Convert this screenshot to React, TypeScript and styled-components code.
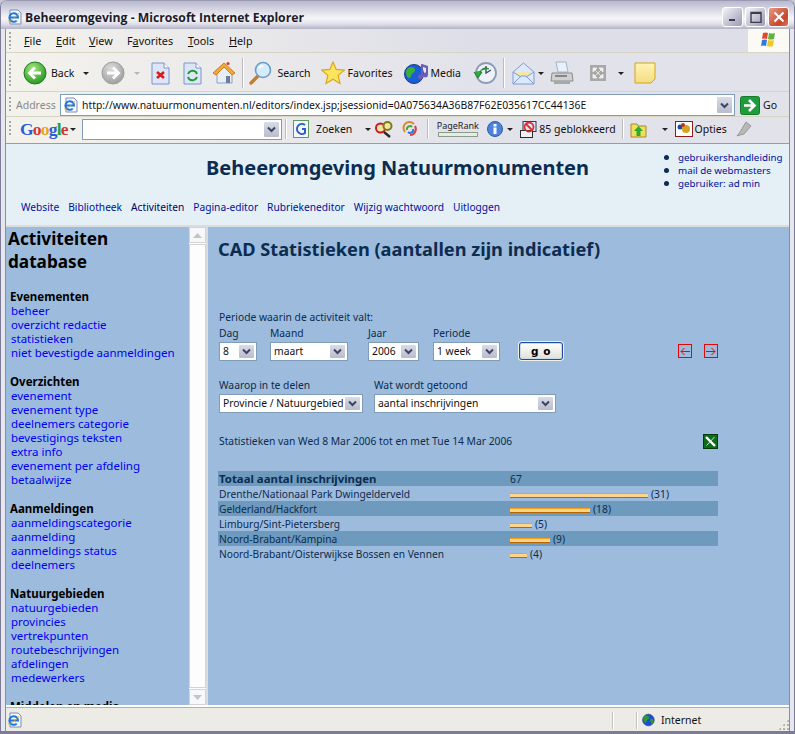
import React from 'react'
import styled, { createGlobalStyle } from 'styled-components'

const GlobalStyle = createGlobalStyle`
    *, *::before, *::after { box-sizing: border-box; }
    html, body { margin: 0; padding: 0; background: #c8c8d8; overflow: hidden; }
    a { text-decoration: none; }
`

const UI = '"Noto Sans", Tahoma, sans-serif'
const WIDE = '"DejaVu Sans", Verdana, sans-serif'

const Window = styled.div`
    width: 795px;
    height: 734px;
    display: flex;
    flex-direction: column;
    background: #e6e6ee;
    border: 1px solid #7c7c98;
    border-bottom-width: 3px;
    border-top-color: #9a9ab4;
    border-radius: 7px 7px 0 0;
    overflow: hidden;
`

const TitleBar = styled.div`
    height: 28px;
    flex: none;
    display: flex;
    align-items: center;
    padding: 4px 5px 0 6px;
    background: linear-gradient(#b8b8cc 0%, #d6d6e4 30%, #f6f6f9 62%, #e0e0ea 82%, #b2b2c6 100%);
`

const TitleText = styled.span`
    font: bold 12.2px "Open Sans", sans-serif;
    color: #1c1c28;
    margin-left: 2px;
    flex: 1;
`

const WinButton = styled.div<{ $close?: boolean }>`
    width: 21px;
    height: 20px;
    margin-left: 2px;
    border: 1px solid #fff;
    border-radius: 3px;
    background: ${p => (p.$close ? 'linear-gradient(135deg, #e89a84, #c8452c 70%, #d87860)' : 'linear-gradient(135deg, #f4f4f8, #b4b4c8 70%, #9c9cb4)')};
    display: flex;
    align-items: center;
    justify-content: center;
`

const Frame = styled.div`
    flex: 1;
    min-height: 0;
    display: flex;
    flex-direction: column;
    margin: 0 4px;
    background: #e8e8f0;
    border-left: 1px solid #8c8ca0;
    border-right: 1px solid #8c8ca0;
`

const MenuBar = styled.div`
    height: 24px;
    flex: none;
    display: flex;
    align-items: center;
    background: linear-gradient(90deg, #f3f2ec, #dedee8 60%, #dedee8);
    border-bottom: 1px solid #d8d4c4;
`

const Grip = styled.i<{ $mr: number }>`
    width: 2px;
    height: 70%;
    flex: none;
    margin: 0 ${p => p.$mr}px 0 3px;
    background: repeating-linear-gradient(#a8a8a8 0 2px, transparent 2px 4px);
`

const MenuItem = styled.span<{ $w: number }>`
    width: ${p => p.$w}px;
    flex: none;
    font: 10.8px ${UI};
    color: #111;
    u { text-decoration: underline; }
`

const FlagBox = styled.div`
    margin-left: auto;
    width: 41px;
    height: 100%;
    background: #fbfaf5;
    display: flex;
    align-items: center;
    justify-content: center;
`

const ToolBar = styled.div`
    height: 39px;
    flex: none;
    display: flex;
    align-items: center;
    padding-top: 2px;
    background: linear-gradient(90deg, #f3f2ec, #e2e2ea 60%);
    border-bottom: 1px solid #d8d4c4;
`

const Tool = styled.div<{ $ml?: number }>`
    display: flex;
    align-items: center;
    flex: none;
    margin-left: ${p => p.$ml ?? 0}px;
    font: 10.5px ${UI};
    color: #111;
`

const Caret = styled.i<{ $ml?: number; $off?: boolean }>`
    width: 0;
    height: 0;
    flex: none;
    margin-left: ${p => p.$ml ?? 0}px;
    border-left: 3px solid transparent;
    border-right: 3px solid transparent;
    border-top: 3px solid ${p => (p.$off ? '#b4b4b4' : '#222')};
`

const Sep = styled.i<{ $ml: number; $h?: number }>`
    width: 1px;
    height: ${p => p.$h ?? 30}px;
    flex: none;
    margin-left: ${p => p.$ml}px;
    background: #bcbcbc;
    box-shadow: 1px 0 0 #fff;
`

const AddressBar = styled.div`
    height: 25px;
    flex: none;
    display: flex;
    align-items: center;
    padding-top: 2px;
    background: linear-gradient(90deg, #f3f2ec, #e2e2ea 60%);
    border-bottom: 1px solid #d8d4c4;
`

const AddressLabel = styled.span`
    font: 10.5px ${UI};
    color: #8a8a8a;
    width: 44px;
    flex: none;
`

const AddressField = styled.div`
    width: 675px;
    height: 22px;
    flex: none;
    display: flex;
    align-items: center;
    background: #fff;
    border: 1px solid #7f9db9;
    font: 10.4px ${UI};
    color: #111;
    padding-left: 2px;
    gap: 3px;
`

const AddressText = styled.span`
    flex: 1;
    white-space: nowrap;
    overflow: hidden;
`

const ArrowButton = styled.div`
    width: 17px;
    align-self: stretch;
    flex: none;
    margin: 1px;
    border: 1px solid #fff;
    border-radius: 2px;
    background: linear-gradient(#d8dce8, #b8bccc);
    display: flex;
    align-items: center;
    justify-content: center;
`

const GoogleBar = styled(AddressBar)`
    height: 27px;
    padding-top: 0;
    padding-bottom: 2px;
    border-bottom: 1px solid #9a9aa8;
`

const GoogleLogo = styled.span`
    font: bold 17.5px "Liberation Serif", serif;
    letter-spacing: -0.8px;
    width: 48px;
    flex: none;
`

const GoogleField = styled.div`
    width: 200px;
    height: 21px;
    flex: none;
    margin-left: 6px;
    background: #fff;
    border: 1px solid #7f9db9;
    display: flex;
    justify-content: flex-end;
`

const PageRank = styled.div`
    display: flex;
    flex-direction: column;
    align-items: center;
    font: 9px ${UI};
    line-height: 10px;
    color: #222;
    margin-left: 8px;
    width: 43px;
    flex: none;
`

const RankBar = styled.i`
    display: block;
    width: 40px;
    height: 5px;
    margin-top: 1px;
    border: 1px solid #8c9c8c;
    background: #e4ece4;
`

const Page = styled.div`
    flex: 1;
    min-height: 0;
    display: flex;
    flex-direction: column;
    background: #9dbbdc;
`

const Header = styled.div`
    height: 83px;
    flex: none;
    display: flex;
    flex-direction: column;
    background: #e4f0f6;
    border-bottom: 2px solid #dcdcdc;
`

const HeaderTop = styled.div`
    height: 55px;
    flex: none;
    display: flex;
    justify-content: space-between;
`

const SiteTitle = styled.h1`
    margin: 10px 0 0 200px;
    font: bold 20px ${UI};
    color: #0c2c50;
    white-space: nowrap;
`

const HelpList = styled.ul`
    margin: 7px 0 0;
    padding: 0;
    list-style: none;
    width: 125px;
    flex: none;
`

const HelpItem = styled.li`
    display: flex;
    align-items: center;
    height: 13px;
    font: 9.8px ${UI};
    color: #00109c;
    white-space: nowrap;
    &::before {
        content: '';
        flex: none;
        width: 5px;
        height: 5px;
        border-radius: 50%;
        background: #0c2c50;
        margin-right: 9px;
    }
`

const TopNav = styled.nav`
    display: flex;
    padding-left: 15px;
    padding-top: 1px;
    gap: 9px;
`

const TopLink = styled.a<{ $active?: boolean }>`
    font: 10.2px ${UI};
    color: ${p => (p.$active ? '#000060' : '#00109c')};
    white-space: nowrap;
`

const Body = styled.div`
    flex: 1;
    min-height: 0;
    display: flex;
`

const Side = styled.aside`
    width: 183px;
    flex: none;
    overflow: hidden;
    padding: 0 0 0 2px;
    color: #000;
`

const SideTitle = styled.h2`
    margin: 0 0 17px;
    font: bold 17.2px/23px ${UI};
    color: #000;
`

const SideSection = styled.section`
    margin: 0 0 15px 2px;
`

const SideHeading = styled.h3`
    margin: 0;
    font: bold 11.5px/14px ${UI};
    color: #000;
`

const SideLink = styled.a`
    display: block;
    font: 11.5px/14px ${UI};
    color: #0000f0;
    margin-left: 1px;
    white-space: nowrap;
`

const Scrollbar = styled.div`
    width: 19px;
    flex: none;
    display: flex;
    flex-direction: column;
    background: #fdfdfd;
    border-right: 2px solid #dcdcdc;
`

const ScrollButton = styled.div`
    height: 16px;
    flex: none;
    background: #f6f8fb;
    border: 1px solid #d4d4d4;
    display: flex;
    align-items: center;
    justify-content: center;
`

const Track = styled.div`
    flex: 1;
    border: 1px solid #d4d4d4;
    margin-top: 1px;
    margin-bottom: 1px;
`

const Main = styled.main`
    flex: 1;
    padding: 0 71px 0 10px;
    color: #0c2c50;
    font: 10.3px ${UI};
`

const PageTitle = styled.h2`
    margin: 11px 0 0;
    font: bold 18.2px/22px ${UI};
    color: #0c2c50;
    white-space: nowrap;
`

const Lead = styled.div`
    margin-top: 50px;
    line-height: 14px;
    padding-left: 1px;
`

const FilterRow = styled.div<{ $mt?: number }>`
    display: flex;
    align-items: flex-end;
    margin-top: ${p => p.$mt ?? 0}px;
`

const Field = styled.label<{ $w: number }>`
    width: ${p => p.$w}px;
    flex: none;
    display: flex;
    flex-direction: column;
    padding-left: 1px;
    line-height: 15px;
`

const Select = styled.div<{ $w: number }>`
    width: ${p => p.$w}px;
    height: 19px;
    margin-top: 1px;
    display: flex;
    align-items: center;
    background: #fff;
    border: 1px solid #7f9db9;
    color: #111;
    padding-left: 3px;
`

const SelectValue = styled.span`
    flex: 1;
    white-space: nowrap;
    overflow: hidden;
`

const GoButton = styled.button`
    width: 44px;
    height: 18px;
    padding: 0;
    margin-bottom: 1px;
    border: 1px solid #1c4c9c;
    border-radius: 3px;
    background: linear-gradient(#fff, #e0e0d8);
    box-shadow: 0 0 0 1px #f0f0e0, inset 0 0 0 1px #c8d8f0;
    font: bold 10.5px ${WIDE};
    letter-spacing: 0.5px;
    color: #000;
`

const NavIcons = styled.div`
    margin-left: auto;
    display: flex;
    gap: 12px;
    margin-bottom: 3px;
`

const RedBox = styled.div`
    width: 14px;
    height: 14px;
    border: 1px solid #e00808;
    display: flex;
    align-items: center;
    justify-content: center;
`

const StatLine = styled.div`
    display: flex;
    align-items: center;
    justify-content: space-between;
    margin-top: 20px;
    height: 16px;
    padding-left: 1px;
`

const Table = styled.div`
    margin-top: 22px;
`

const Row = styled.div<{ $band?: boolean }>`
    display: flex;
    align-items: center;
    height: 15px;
    padding-left: 1px;
    background: ${p => (p.$band ? '#6e9bbd' : 'transparent')};
    white-space: nowrap;
`

const RowLabel = styled.div<{ $bold?: boolean }>`
    width: 291px;
    flex: none;
    font-weight: ${p => (p.$bold ? 700 : 400)};
    font-size: ${p => (p.$bold ? 11.4 : 10.2)}px;
`

const Bar = styled.i`
    display: block;
    height: 5px;
    margin-top: 4px;
    margin-right: 3px;
    background: #ffd48c;
    border-top: 1px solid #ff9c14;
    border-bottom: 1px solid #b86400;
`

const StatusBar = styled.div`
    height: 26px;
    flex: none;
    display: flex;
    align-items: center;
    background: #ecebe6;
    border-top: 2px solid #fff;
    box-shadow: inset 0 1px 0 #b0b0b0;
    font: 10.5px ${UI};
    color: #111;
    padding: 2px 0 0 1px;
`

const StatusCell = styled.div<{ $ml: number }>`
    margin-left: ${p => p.$ml}px;
    height: 17px;
    border-left: 1px solid #c4c4bc;
    box-shadow: inset 1px 0 0 #fff;
    display: flex;
    align-items: center;
    padding-left: 5px;
    gap: 5px;
`

const ResizeGrip = styled.i`
    margin: auto 0 1px auto;
    width: 11px;
    height: 11px;
    background: radial-gradient(circle, #b4b4ac 1px, transparent 1.2px) 0 0 / 4px 4px;
    clip-path: polygon(100% 0, 100% 100%, 0 100%);
`

const menus: [React.ReactNode, number][] = [
    [<><u>F</u>ile</>, 32],
    [<><u>E</u>dit</>, 33],
    [<><u>V</u>iew</>, 38],
    [<>F<u>a</u>vorites</>, 61],
    [<><u>T</u>ools</>, 41],
    [<><u>H</u>elp</>, 40],
]

const sections = [
    { title: 'Evenementen', links: ['beheer', 'overzicht redactie', 'statistieken', 'niet bevestigde aanmeldingen'] },
    { title: 'Overzichten', links: ['evenement', 'evenement type', 'deelnemers categorie', 'bevestigings teksten', 'extra info', 'evenement per afdeling', 'betaalwijze'] },
    { title: 'Aanmeldingen', links: ['aanmeldingscategorie', 'aanmelding', 'aanmeldings status', 'deelnemers'] },
    { title: 'Natuurgebieden', links: ['natuurgebieden', 'provincies', 'vertrekpunten', 'routebeschrijvingen', 'afdelingen', 'medewerkers'] },
    { title: 'Middelen en media', links: [] },
]

const stats = [
    { label: 'Drenthe/Nationaal Park Dwingelderveld', count: 31, width: 138 },
    { label: 'Gelderland/Hackfort', count: 18, width: 80 },
    { label: 'Limburg/Sint-Pietersberg', count: 5, width: 22 },
    { label: 'Noord-Brabant/Kampina', count: 9, width: 40 },
    { label: 'Noord-Brabant/Oisterwijkse Bossen en Vennen', count: 4, width: 17 },
]

const topLinks = ['Website', 'Bibliotheek', 'Activiteiten', 'Pagina-editor', 'Rubriekeneditor', 'Wijzig wachtwoord', 'Uitloggen']

const Chevron = () => (
    <svg width="9" height="7" viewBox="0 0 9 7">
        <path d="M1 1.500 L4.500 5 L8 1.500" fill="none" stroke="#3c4460" strokeWidth="2" />
    </svg>
)

const IeIcon = ({ size = 16 }: { size?: number }) => (
    <svg width={size} height={size} viewBox="0 0 16 16">
        <path d="M3 1h8l3 3v11H3z" fill="#f4f6fc" stroke="#7c8cb0" />
        <path d="M2.500 8.500h8.500a4.300 4.300 0 1 0-1.300 3.100" fill="none" stroke="#1c78dc" strokeWidth="2" />
        <path d="M1 12c3 0 9-5 11-8" fill="none" stroke="#f0a020" strokeWidth="0.800" />
    </svg>
)

const RoundArrow = ({ off, dir }: { off?: boolean; dir: 'l' | 'r' }) => (
    <svg width="24" height="24" viewBox="0 0 24 24">
        <defs>
            <radialGradient id={off ? 'ra-off' : 'ra-on'} cx="0.4" cy="0.3" r="0.8">
                <stop offset="0" stopColor={off ? '#dcdcdc' : '#a4e87c'} />
                <stop offset="1" stopColor={off ? '#989898' : '#1c8c1c'} />
            </radialGradient>
        </defs>
        <circle cx="12" cy="12" r="11" fill={`url(#${off ? 'ra-off' : 'ra-on'})`} stroke={off ? '#9c9c9c' : '#1c7c1c'} />
        <path d={dir === 'l' ? 'M18 12H8M12 6.500 6.500 12l5.500 5.500' : 'M6 12h10M12 6.500l5.500 5.500L12 17.500'} fill="none" stroke="#fff" strokeWidth="3" />
    </svg>
)

const PageIcon = ({ kind }: { kind: 'stop' | 'refresh' }) => (
    <svg width="19" height="23" viewBox="0 0 19 23">
        <path d="M1 1h12l5 5v16H1z" fill="#dce6f8" stroke="#7c94c8" />
        <path d="M13 1v5h5" fill="#fff" stroke="#7c94c8" />
        {kind === 'stop' ? (
            <path d="M6 10l7 6M13 10l-7 6" stroke="#dc1c1c" strokeWidth="2.600" />
        ) : (
            <g fill="none" stroke="#1c9c2c" strokeWidth="2">
                <path d="M5 12a5 5 0 0 1 8-2l1 2" />
                <path d="M14 15a5 5 0 0 1-8 2l-1-2" />
            </g>
        )}
    </svg>
)

const HomeIcon = () => (
    <svg width="24" height="24" viewBox="0 0 24 24">
        <path d="M5 11v11h15V11l-6-6z" fill="#e8eef8" stroke="#8ca0c0" />
        <path d="M1 12 12 2l11 10-3 2-8-8-8 8z" fill="#f4a83c" stroke="#c87c1c" />
        <rect x="14" y="15" width="4" height="7" fill="#6c7c9c" />
        <circle cx="16" cy="2.500" r="1.600" fill="#dc3c2c" />
    </svg>
)

const SearchIcon = () => (
    <svg width="24" height="24" viewBox="0 0 24 24">
        <path d="M9 15 2 22" stroke="#c87c2c" strokeWidth="3.400" strokeLinecap="round" />
        <circle cx="14" cy="9" r="7.500" fill="#d4ecfc" stroke="#6c9cc8" strokeWidth="1.600" />
        <path d="M10 7a4 4 0 0 1 4-2" fill="none" stroke="#fff" strokeWidth="2" />
    </svg>
)

const StarIcon = () => (
    <svg width="24" height="24" viewBox="0 0 24 24">
        <path d="M12 1l3.200 7.400 8 .7-6 5.300 1.800 8L12 18.200 5 22.400l1.800-8-6-5.300 8-.7z" fill="#fce45c" stroke="#d8a81c" strokeWidth="1.200" />
    </svg>
)

const GlobeIcon = ({ size = 24 }: { size?: number }) => (
    <svg width={size} height={size} viewBox="0 0 24 24">
        <circle cx="11" cy="12" r="10" fill="#1c4cd4" stroke="#102c80" />
        <path d="M5 5c3-2 6 0 7 2s-1 4-3 5-1 5-3 5-4-5-4-7 1-4 3-5zM15 10c3-1 5 1 5 4s-3 5-4 4-3-7-1-8z" fill="#2c9c2c" />
    </svg>
)

const MediaIcon = () => (
    <svg width="26" height="24" viewBox="0 0 26 24">
        <circle cx="10" cy="13" r="9.500" fill="#1c5cd4" stroke="#103c90" />
        <path d="M4 7c3-2 6-1 7 1s-2 4-3 5-1 4-3 4-3-4-3-6 1-3 2-4z" fill="#3cac3c" />
        <path d="M18 3l6 2v9a2.500 2.500 0 1 1-2-2.500V7l-3-1v10a2.500 2.500 0 1 1-2-2.500V3z" fill="#6c5cb4" />
    </svg>
)

const HistoryIcon = () => (
    <svg width="24" height="24" viewBox="0 0 24 24">
        <circle cx="13" cy="12" r="10" fill="#eef2f8" stroke="#8c9cb4" strokeWidth="1.800" />
        <path d="M13 5v7l5-3" fill="none" stroke="#3c4c6c" strokeWidth="1.400" />
        <path d="M1 11l4 6 4-6H7a6 6 0 0 1 9-3" fill="#2cac3c" stroke="#1c7c2c" strokeWidth="1" />
    </svg>
)

const MailIcon = () => (
    <svg width="23" height="23" viewBox="0 0 23 23">
        <path d="M1 10 11.500 1 22 10v12H1z" fill="#dce8fc" stroke="#7c9cd0" />
        <path d="M4 10h15l-3 4H7z" fill="#f8e4a4" />
        <path d="M1 22l8-8h5l8 8M1 10l8 5M22 10l-8 5" fill="none" stroke="#7c9cd0" />
    </svg>
)

const PrintIcon = () => (
    <svg width="24" height="24" viewBox="0 0 24 24">
        <path d="M6 1h10l2 10H8z" fill="#e8f0fc" stroke="#a4b4c8" />
        <path d="M2 12h20l1 8H1z" fill="#d0d0d0" stroke="#8c8c8c" />
        <path d="M4 20h16v3H4z" fill="#a8a8a8" />
        <path d="M5 15h12" stroke="#6c6c6c" strokeWidth="1.500" />
    </svg>
)

const GreyIcon = () => (
    <svg width="16" height="16" viewBox="0 0 16 16">
        <rect width="16" height="16" fill="#a8a8a8" />
        <path d="M3 7V3h4zM13 7V3H9zM3 9v4h4zM13 9v4H9zM4 4l8 8M12 4l-8 8" fill="#f0f0f0" stroke="#f0f0f0" strokeWidth=".8" />
    </svg>
)

const NoteIcon = () => (
    <svg width="22" height="22" viewBox="0 0 22 22">
        <defs>
            <linearGradient id="note" x1="0" y1="0" x2="0" y2="1">
                <stop offset="0" stopColor="#fff4b4" />
                <stop offset="1" stopColor="#f4dc80" />
            </linearGradient>
        </defs>
        <path d="M1 1h20v16l-4 4H1z" fill="url(#note)" stroke="#d4a41c" />
    </svg>
)

const FlagIcon = () => (
    <svg width="20" height="17" viewBox="0 0 20 17">
        <path d="M4 1q3-1 5 0l-1 6q-3-1-5 0z" fill="#e0482c" />
        <path d="M10 1q3 1 6 0l-1 6q-3 1-6 0z" fill="#5cb43c" />
        <path d="M3 8q3-1 5 0l-1 6q-3-1-5 0z" fill="#2c7ce0" />
        <path d="M9 8q3 1 6 0l-1 6q-3 1-6 0z" fill="#f4c424" />
    </svg>
)

const GoIcon = () => (
    <svg width="20" height="19" viewBox="0 0 20 19">
        <rect x=".5" y=".5" width="19" height="18" rx="2" fill="#1f9c3c" stroke="#147c2c" />
        <path d="M4 9.500h10M9 4l5.500 5.500L9 15" fill="none" stroke="#fff" strokeWidth="2.600" />
    </svg>
)

const GSquare = () => (
    <svg width="16" height="18" viewBox="0 0 16 18">
        <rect x=".5" y=".5" width="15" height="17" fill="#f4f8fc" stroke="#5c9c5c" />
        <path d="M12 5a5 5 0 1 0 0 8V9H9" fill="none" stroke="#2c5cc8" strokeWidth="2" />
    </svg>
)

const BinocIcon = () => (
    <svg width="18" height="18" viewBox="0 0 18 18">
        <circle cx="5.500" cy="8" r="4.500" fill="#f4e4a4" stroke="#c81c1c" strokeWidth="2" />
        <circle cx="12.500" cy="6" r="4" fill="#f4e4a4" stroke="#7c7c1c" strokeWidth="2" />
        <path d="M9 12l6 5" stroke="#2c2c2c" strokeWidth="2.400" />
    </svg>
)

const SwirlIcon = () => (
    <svg width="16" height="16" viewBox="0 0 16 16" fill="none" strokeWidth="2">
        <path d="M3 11a6 6 0 0 1 9-8" stroke="#e0882c" />
        <path d="M13 5a6 6 0 0 1-5 9" stroke="#dc3c3c" />
        <path d="M5 9a3 3 0 0 1 5-3" stroke="#3cac3c" />
        <path d="M11 8a3 3 0 0 1-5 3" stroke="#2c7cdc" />
    </svg>
)

const InfoIcon = () => (
    <svg width="16" height="16" viewBox="0 0 16 16">
        <circle cx="8" cy="8" r="7.500" fill="#4c84dc" stroke="#2c5ca4" />
        <rect x="6.500" y="6.500" width="3" height="6.500" fill="#fff" />
        <rect x="6.500" y="3" width="3" height="2.500" fill="#fff" />
    </svg>
)

const BlockIcon = () => (
    <svg width="17" height="17" viewBox="0 0 17 17">
        <rect x="3" y=".5" width="13" height="10" fill="#dce8f8" stroke="#2c3c5c" />
        <rect x=".5" y="9.500" width="12" height="7" fill="#f4f4f4" stroke="#2c2c2c" />
        <circle cx="9" cy="6" r="4.500" fill="none" stroke="#dc2c2c" strokeWidth="1.800" />
        <path d="M6 3l6 6" stroke="#dc2c2c" strokeWidth="1.800" />
    </svg>
)

const FolderIcon = () => (
    <svg width="17" height="17" viewBox="0 0 17 17">
        <path d="M1 3h6l1 2h8v11H1z" fill="#f4dc5c" stroke="#a48c2c" />
        <path d="M8.500 5 13 10h-2.500v5h-4v-5H4z" fill="#2cac2c" />
    </svg>
)

const OptiesIcon = () => (
    <svg width="18" height="16" viewBox="0 0 18 16">
        <rect x=".5" y=".5" width="17" height="15" fill="#fff" stroke="#8c1c1c" />
        <circle cx="5" cy="6" r="2.500" fill="#1c4c9c" />
        <circle cx="11" cy="8" r="4" fill="#d4a41c" />
        <circle cx="8" cy="4" r="2" fill="#c82c2c" />
    </svg>
)

const PencilIcon = () => (
    <svg width="16" height="16" viewBox="0 0 16 16">
        <path d="M10 1l5 4-7 8-4 1-3 1 3-4z" fill="#b8b8b8" stroke="#989898" />
    </svg>
)

const ExcelIcon = () => (
    <svg width="15" height="15" viewBox="0 0 15 15">
        <rect x=".5" y=".5" width="14" height="14" fill="#0c6c1c" stroke="#043c0c" />
        <path d="M3 3l9 9" stroke="#fff" strokeWidth="2.400" />
        <path d="M11.500 3 3.500 11.500" stroke="#c8e8c8" strokeWidth="1" />
    </svg>
)

const ScrollArrow = ({ up }: { up?: boolean }) => (
    <svg width="9" height="5" viewBox="0 0 9 5">
        <path d={up ? 'M0 5h9L4.500 0z' : 'M0 0h9L4.500 5z'} fill="#c4c4c4" />
    </svg>
)

const RedArrow = ({ right }: { right?: boolean }) => (
    <svg width="10" height="9" viewBox="0 0 10 9">
        <path d={right ? 'M0 4.500h9M5.500 1l3.500 3.500-3.500 3.500' : 'M10 4.500H1M4.500 1 1 4.500 4.500 8'} fill="none" stroke="#e00808" />
    </svg>
)

const DropSelect = ({ w, value }: { w: number; value: string }) => (
    <Select $w={w}>
        <SelectValue>{value}</SelectValue>
        <ArrowButton><Chevron /></ArrowButton>
    </Select>
)

function App() {
    return (
        <Window>
            <GlobalStyle />
            <TitleBar>
                <IeIcon />
                <TitleText>Beheeromgeving - Microsoft Internet Explorer</TitleText>
                <WinButton>
                    <svg width="10" height="10" viewBox="0 0 10 10"><rect x="1" y="7" width="6" height="2" fill="#3c3c50" /></svg>
                </WinButton>
                <WinButton>
                    <svg width="12" height="12" viewBox="0 0 12 12"><path d="M1 1.500h10v10H1z" fill="none" stroke="#3c3c50" strokeWidth="1.400" /><path d="M1 2h10" stroke="#3c3c50" strokeWidth="2" /></svg>
                </WinButton>
                <WinButton $close>
                    <svg width="12" height="12" viewBox="0 0 12 12"><path d="M1.500 1.500l9 9M10.500 1.500l-9 9" stroke="#fff" strokeWidth="2.200" /></svg>
                </WinButton>
            </TitleBar>
            <Frame>
                <MenuBar>
                    <Grip $mr={13} />
                    {menus.map(([label, w], i) => <MenuItem key={i} $w={w}>{label}</MenuItem>)}
                    <FlagBox><FlagIcon /></FlagBox>
                </MenuBar>
                <ToolBar>
                    <Grip $mr={10} />
                    <Tool $ml={2}><RoundArrow dir="l" /></Tool>
                    <Tool $ml={4}>Back</Tool>
                    <Caret $ml={9} />
                    <Tool $ml={12}><RoundArrow dir="r" off /></Tool>
                    <Caret $ml={9} $off />
                    <Tool $ml={11}><PageIcon kind="stop" /></Tool>
                    <Tool $ml={13}><PageIcon kind="refresh" /></Tool>
                    <Tool $ml={10}><HomeIcon /></Tool>
                    <Sep $ml={6} />
                    <Tool $ml={6}><SearchIcon /></Tool>
                    <Tool $ml={4}>Search</Tool>
                    <Tool $ml={10}><StarIcon /></Tool>
                    <Tool $ml={3}>Favorites</Tool>
                    <Tool $ml={12}><MediaIcon /></Tool>
                    <Tool $ml={0}>Media</Tool>
                    <Tool $ml={12}><HistoryIcon /></Tool>
                    <Sep $ml={6} />
                    <Tool $ml={8}><MailIcon /></Tool>
                    <Caret $ml={3} />
                    <Tool $ml={6}><PrintIcon /></Tool>
                    <Tool $ml={16}><GreyIcon /></Tool>
                    <Caret $ml={12} />
                    <Tool $ml={10}><NoteIcon /></Tool>
                </ToolBar>
                <AddressBar>
                    <Grip $mr={5} />
                    <AddressLabel>Address</AddressLabel>
                    <AddressField>
                        <IeIcon />
                        <AddressText>http://www.natuurmonumenten.nl/editors/index.jsp;jsessionid=0A075634A36B87F62E035617CC44136E</AddressText>
                        <ArrowButton><Chevron /></ArrowButton>
                    </AddressField>
                    <Tool $ml={5}><GoIcon /></Tool>
                    <Tool $ml={3}>Go</Tool>
                </AddressBar>
                <GoogleBar>
                    <Grip $mr={9} />
                    <GoogleLogo>
                        <span style={{ color: '#2c5cd4' }}>G</span>
                        <span style={{ color: '#d4382c' }}>o</span>
                        <span style={{ color: '#e4a81c' }}>o</span>
                        <span style={{ color: '#2c5cd4' }}>g</span>
                        <span style={{ color: '#2c9c3c' }}>l</span>
                        <span style={{ color: '#d4382c' }}>e</span>
                    </GoogleLogo>
                    <Caret $ml={2} />
                    <GoogleField><ArrowButton><Chevron /></ArrowButton></GoogleField>
                    <Sep $ml={3} $h={20} />
                    <Tool $ml={7}><GSquare /></Tool>
                    <Tool $ml={7}>Zoeken</Tool>
                    <Caret $ml={13} />
                    <Tool $ml={4}><BinocIcon /></Tool>
                    <Tool $ml={9}><SwirlIcon /></Tool>
                    <Sep $ml={9} $h={20} />
                    <PageRank>PageRank<RankBar /></PageRank>
                    <Tool $ml={8}><InfoIcon /></Tool>
                    <Caret $ml={4} />
                    <Tool $ml={7}><BlockIcon /></Tool>
                    <Tool $ml={2}>85 geblokkeerd</Tool>
                    <Sep $ml={6} $h={20} />
                    <Tool $ml={7}><FolderIcon /></Tool>
                    <Caret $ml={15} />
                    <Tool $ml={7}><OptiesIcon /></Tool>
                    <Tool $ml={2}>Opties</Tool>
                    <Tool $ml={9}><PencilIcon /></Tool>
                </GoogleBar>
                <Page>
                    <Header>
                        <HeaderTop>
                            <SiteTitle>Beheeromgeving Natuurmonumenten</SiteTitle>
                            <HelpList>
                                <HelpItem>gebruikershandleiding</HelpItem>
                                <HelpItem>mail de webmasters</HelpItem>
                                <HelpItem>gebruiker: ad min</HelpItem>
                            </HelpList>
                        </HeaderTop>
                        <TopNav>
                            {topLinks.map(l => <TopLink key={l} $active={l === 'Activiteiten'}>{l}</TopLink>)}
                        </TopNav>
                    </Header>
                    <Body>
                        <Side>
                            <SideTitle>Activiteiten database</SideTitle>
                            {sections.map(s => (
                                <SideSection key={s.title}>
                                    <SideHeading>{s.title}</SideHeading>
                                    {s.links.map(l => <SideLink key={l}>{l}</SideLink>)}
                                </SideSection>
                            ))}
                        </Side>
                        <Scrollbar>
                            <ScrollButton><ScrollArrow up /></ScrollButton>
                            <Track />
                            <ScrollButton><ScrollArrow /></ScrollButton>
                        </Scrollbar>
                        <Main>
                            <PageTitle>CAD Statistieken (aantallen zijn indicatief)</PageTitle>
                            <Lead>Periode waarin de activiteit valt:</Lead>
                            <FilterRow $mt={2}>
                                <Field $w={51}>Dag<DropSelect w={38} value="8" /></Field>
                                <Field $w={98}>Maand<DropSelect w={78} value="maart" /></Field>
                                <Field $w={65}>Jaar<DropSelect w={51} value="2006" /></Field>
                                <Field $w={87}>Periode<DropSelect w={67} value="1 week" /></Field>
                                <GoButton>g o</GoButton>
                                <NavIcons>
                                    <RedBox><RedArrow /></RedBox>
                                    <RedBox><RedArrow right /></RedBox>
                                </NavIcons>
                            </FilterRow>
                            <FilterRow $mt={17}>
                                <Field $w={155}>Waarop in te delen<DropSelect w={144} value="Provincie / Natuurgebied" /></Field>
                                <Field $w={190}>Wat wordt getoond<DropSelect w={182} value="aantal inschrijvingen" /></Field>
                            </FilterRow>
                            <StatLine>
                                Statistieken van Wed 8 Mar 2006 tot en met Tue 14 Mar 2006
                                <ExcelIcon />
                            </StatLine>
                            <Table>
                                <Row $band>
                                    <RowLabel $bold>Totaal aantal inschrijvingen</RowLabel>
                                    67
                                </Row>
                                {stats.map((s, i) => (
                                    <Row key={s.label} $band={i % 2 === 1}>
                                        <RowLabel>{s.label}</RowLabel>
                                        <Bar style={{ width: s.width }} />
                                        ({s.count})
                                    </Row>
                                ))}
                            </Table>
                        </Main>
                    </Body>
                </Page>
                <StatusBar>
                    <IeIcon />
                    <StatusCell $ml={589} />
                    <StatusCell $ml={18}><GlobeIcon size={14} />Internet</StatusCell>
                    <ResizeGrip />
                </StatusBar>
            </Frame>
        </Window>
    )
}

export default App
